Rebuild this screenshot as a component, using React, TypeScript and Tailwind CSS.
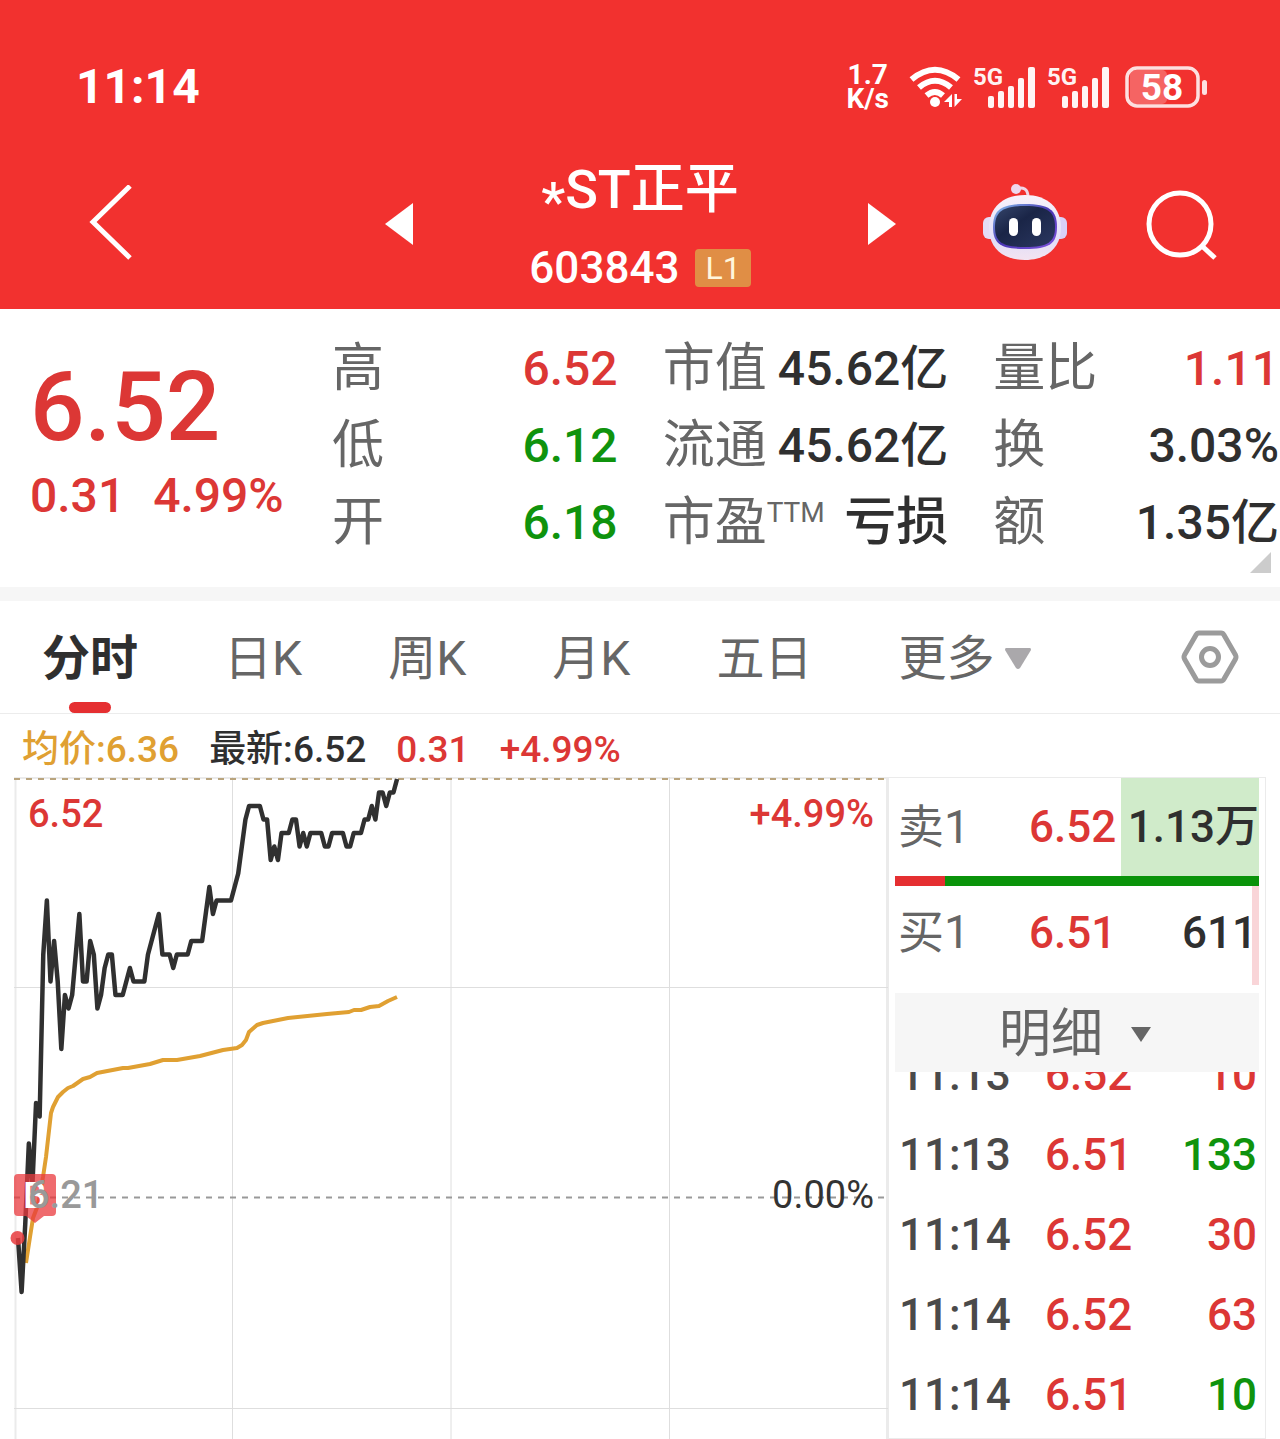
import clsx from 'clsx';

type Tone = 'up' | 'down' | 'dark';

const toneClass: Record<Tone, string> = {
  up: 'text-[#dc3735]',
  down: 'text-[#0f930d]',
  dark: 'text-[#2f2f2f]',
};

const stats: { label: string; sup?: string; value: string; tone: Tone }[] = [
  { label: '高', value: '6.52', tone: 'up' },
  { label: '市值', value: '45.62亿', tone: 'dark' },
  { label: '量比', value: '1.11', tone: 'up' },
  { label: '低', value: '6.12', tone: 'down' },
  { label: '流通', value: '45.62亿', tone: 'dark' },
  { label: '换', value: '3.03%', tone: 'dark' },
  { label: '开', value: '6.18', tone: 'down' },
  { label: '市盈', sup: 'TTM', value: '亏损', tone: 'dark' },
  { label: '额', value: '1.35亿', tone: 'dark' },
];

const tabs = ['分时', '日K', '周K', '月K', '五日'];

const trades: { time: string; price: string; volume: string; tone: Tone }[] = [
  { time: '11:13', price: '6.52', volume: '10', tone: 'up' },
  { time: '11:13', price: '6.51', volume: '133', tone: 'down' },
  { time: '11:14', price: '6.52', volume: '30', tone: 'up' },
  { time: '11:14', price: '6.52', volume: '63', tone: 'up' },
  { time: '11:14', price: '6.51', volume: '10', tone: 'down' },
];

// Minute prices, in cents above the previous close (6.21)
const minutes = [
  -3, -7, -2, 4, 1, 7, 6, 18, 22, 16, 19, 16, 11, 15, 14, 15, 18, 21, 16, 16, 19, 18, 14, 15, 17, 18, 18,
  15, 15, 15, 16, 17, 16, 16, 16, 16, 18, 19, 20, 21, 18, 18, 18, 17, 18, 18, 18, 18, 19, 19, 19, 19, 21,
  23, 21, 22, 22, 22, 22, 22, 23, 24, 26, 28, 29, 29, 29, 29, 28, 28, 25, 26, 25, 27, 27, 27, 28, 28, 26,
  27, 26, 27, 27, 27, 27, 26, 26, 27, 27, 27, 27, 26, 26, 27, 27, 27, 28, 28, 29, 28, 30, 30, 29, 30, 30,
  31,
];

const pricePoints = minutes.map((cents, i) => `${4 + i * 3.61},${2 + (31 - cents) * 13.5}`).join(' ');

const averagePoints =
  '12,486 16,460 19,441 24,428 29,400 32,380 37,336 39,330 44,320 49,315 54,311 59,309 69,302 76,300 83,296 109,291 114,291 136,287 149,283 163,283 186,279 209,273 223,271 228,268 232,263 235,255 243,248 249,246 274,241 313,237 335,235 340,233 347,233 356,230 365,229 374,224 383,220';

function Signal() {
  return (
    <svg className="overflow-visible" width="63" height="44" viewBox="0 0 63 44" fill="#fff" fillOpacity=".95">
      <text x="0" y="20" fontSize="24" fontWeight="700">5G</text>
      <rect x="15" y="31" width="6" height="12" rx="2" />
      <rect x="25" y="26" width="6" height="17" rx="2" />
      <rect x="35" y="21" width="6" height="22" rx="2" />
      <rect x="45" y="13" width="6" height="30" rx="2" />
      <rect x="55" y="2" width="7" height="41" rx="2" />
    </svg>
  );
}

function StatusBar() {
  return (
    <div className="flex h-[139px] items-center justify-between pt-[35px] pr-[72px] pl-[76px]">
      <span className="text-5xl leading-none font-bold">11:14</span>
      <div className="flex items-center gap-[11px]">
        <div className="mr-[9px] text-center text-[28px] leading-6 font-bold">
          1.7
          <br />
          K/s
        </div>
        <svg width="53" height="44" viewBox="0 0 53 44" fill="none" stroke="#fff" strokeWidth="6">
          <path d="M2.500 14.500Q26 -5 49.500 14.500" />
          <path d="M10 22.500Q26 9 42 22.500" />
          <path d="M17.500 30.500Q26 23.500 34 30.500" />
          <circle cx="26" cy="37" r="5" fill="#fff" stroke="none" />
          <path d="M43 29v13h-3v-5H35zM45.500 29h2.500v5H53L45.500 42z" fill="#fff" stroke="none" />
        </svg>
        <Signal />
        <Signal />
        <svg className="ml-1" width="83" height="44" viewBox="0 0 83 44">
          <rect x="5" y="5" width="37" height="34" rx="5" fill="#fff" fillOpacity=".25" />
          <rect x="2" y="3" width="71" height="38" rx="10" fill="none" stroke="#fff" strokeOpacity=".85" strokeWidth="3.500" />
          <rect x="77" y="15" width="5" height="15" rx="2.500" fill="#fff" fillOpacity=".85" />
          <text x="37" y="35" textAnchor="middle" fontSize="37" fontWeight="700" fill="#fff">58</text>
        </svg>
      </div>
    </div>
  );
}

function RobotIcon() {
  return (
    <svg width="86" height="80" viewBox="0 4 86 80">
      <defs>
        <linearGradient id="shell" x1="0" y1="0" x2="0" y2="1">
          <stop offset="0" stopColor="#f8f2fb" />
          <stop offset=".7" stopColor="#e2def8" />
          <stop offset="1" stopColor="#f3e4f1" />
        </linearGradient>
        <linearGradient id="rim" x1="0" y1="0" x2="1" y2="1">
          <stop offset="0" stopColor="#86c4ec" />
          <stop offset=".5" stopColor="#4a35b4" />
          <stop offset="1" stopColor="#8155df" />
        </linearGradient>
        <linearGradient id="visor" x1="0" y1="0" x2="1" y2="1">
          <stop offset="0" stopColor="#35456b" />
          <stop offset=".4" stopColor="#1a2547" />
          <stop offset="1" stopColor="#2b3861" />
        </linearGradient>
      </defs>
      <path d="M33 9Q46 5 46 17" fill="none" stroke="#f0d5e6" strokeWidth="3" />
      <circle cx="34" cy="9" r="5" fill="#eed8ed" />
      <rect x="1" y="37" width="14" height="22" rx="6" fill="#e4dcf7" />
      <rect x="71" y="37" width="14" height="22" rx="6" fill="#d9d0f8" />
      <path d="M43 15C66 15 79 28 79 48C79 69 63 80 43 80C22 80 7 69 7 48C7 28 20 15 43 15Z" fill="url(#shell)" />
      <path d="M43 24C67 24 75 30 75 47C75 64 67 69 43 69C19 69 11 64 11 47C11 30 19 24 43 24Z" fill="url(#rim)" />
      <path d="M43 26C66 26 73 32 73 47C73 62 66 67 43 67C20 67 13 62 13 47C13 32 20 26 43 26Z" fill="url(#visor)" />
      <rect x="27" y="38" width="9" height="18" rx="4.500" fill="#fff" />
      <rect x="50" y="38" width="9" height="18" rx="4.500" fill="#fff" />
    </svg>
  );
}

function NavBar() {
  return (
    <nav className="grid h-[170px] grid-cols-[1fr_455px_1fr] items-center">
      <div className="flex items-center justify-between pl-[88px]">
        <button type="button" aria-label="返回">
          <svg width="44" height="78" viewBox="0 0 44 78" fill="none" stroke="#fff" strokeWidth="5">
            <path d="M42 1L5 37L42 73" />
          </svg>
        </button>
        <button type="button" aria-label="上一只">
          <svg width="28" height="42" viewBox="0 0 28 42" fill="#fff">
            <path d="M28 0V42L0 21Z" />
          </svg>
        </button>
      </div>
      <div className="flex flex-col items-center gap-[18px]">
        <h1 className="text-[54px] leading-[64px] font-medium">
          <span className="align-sub leading-none">*</span>ST正平
        </h1>
        <div className="flex items-center gap-4">
          <span className="text-[44px] leading-[44px] font-medium">603843</span>
          <span className="rounded bg-[#e08e45] px-2.5 text-[32px] leading-[38px] text-[#fff6dc]">L1</span>
        </div>
      </div>
      <div className="flex items-center justify-between pr-[62px]">
        <button type="button" aria-label="下一只">
          <svg width="28" height="42" viewBox="0 0 28 42" fill="#fff">
            <path d="M0 0V42L28 21Z" />
          </svg>
        </button>
        <div className="flex items-center gap-[78px]">
          <button type="button" aria-label="智能助手">
            <RobotIcon />
          </button>
          <button type="button" aria-label="搜索">
            <svg width="72" height="72" viewBox="0 0 72 72" fill="none" stroke="#fff" strokeWidth="5">
              <circle cx="34" cy="36" r="31" />
              <path d="M56 58L69 70" />
            </svg>
          </button>
        </div>
      </div>
    </nav>
  );
}

function Quote() {
  return (
    <section className="flex h-[292px] border-b-[14px] border-[#f6f6f6] pt-[21px] pr-px pl-[30px]">
      <div className="w-[302px] shrink-0 pt-8 font-medium text-[#dc3735]">
        <div className="text-8xl leading-[90px]">6.52</div>
        <div className="flex gap-7 pt-2 text-5xl leading-[72px]">
          <span>0.31</span>
          <span>4.99%</span>
        </div>
      </div>
      <div className="relative flex-1">
        <dl className="grid grid-cols-3 gap-x-[45px] text-5xl leading-[77px]">
          {stats.map(({ label, sup, value, tone }) => (
            <div key={label} className="flex justify-between whitespace-nowrap">
              <dt className="flex text-[52px] text-[#666]">
                {label}
                {sup && <span className="text-[28px] leading-[58px]">{sup}</span>}
              </dt>
              <dd className={clsx('font-medium', toneClass[tone], sup && 'text-[52px]')}>{value}</dd>
            </div>
          ))}
        </dl>
        <svg className="absolute right-2 bottom-[14px]" width="21" height="21" viewBox="0 0 21 21">
          <path d="M21 0V21H0Z" fill="#ccc" />
        </svg>
      </div>
    </section>
  );
}

function Tabs() {
  return (
    <div className="flex h-[113px] items-center justify-between border-b border-[#ececec] pr-[41px] pl-[42px]">
      <div className="flex h-full gap-[86px] text-5xl whitespace-nowrap text-[#666]">
        {tabs.map((tab, i) => (
          <button
            key={tab}
            type="button"
            className={clsx('relative pt-1', i === 0 && 'font-bold text-[#2f2f2f]')}
          >
            {tab}
            {i === 0 && (
              <span className="absolute bottom-0 left-1/2 h-[11px] w-[42px] -translate-x-1/2 rounded-full bg-[#e52f31]" />
            )}
          </button>
        ))}
        <button type="button" className="flex items-center gap-[11px] pt-1">
          更多
          <svg width="26" height="22" viewBox="0 0 26 22" fill="#aaa8ab">
            <path d="M1 0H25Q26 0 26 2L15 20Q13 22 11 20L0 2Q0 0 1 0Z" />
          </svg>
        </button>
      </div>
      <button type="button" aria-label="设置">
        <svg width="58" height="54" viewBox="0 0 58 54" fill="none" stroke="#9b9b9b" strokeWidth="5">
          <path d="M18 3H40Q42 3 43 5L54.500 25Q55.500 27 54.500 29L43 49Q42 51 40 51H18Q16 51 15 49L3.500 29Q2.500 27 3.500 25L15 5Q16 3 18 3Z" />
          <circle cx="29" cy="27" r="8.500" />
        </svg>
      </button>
    </div>
  );
}

function Chart() {
  return (
    <div className="relative min-w-0 flex-1 text-[38px] leading-none">
      <svg className="block w-full overflow-visible" viewBox="0 0 874 662" fill="none">
        <g stroke="#dedede">
          <path d="M1.500 0V662M873 0V662M0 1H874" stroke="#ebebeb" strokeWidth="2" />
          <path d="M218.500 0V662M437 0V662M655.500 0V662M0 210.500H874M0 631.500H874" />
        </g>
        <path d="M0 2H874" stroke="#b9a47d" strokeWidth="2" strokeDasharray="6 6" />
        <path d="M0 420.500H874" stroke="#999" strokeWidth="2" strokeDasharray="6 6" />
        <polyline points={averagePoints} stroke="#e0a032" strokeWidth="4" strokeLinejoin="round" />
        <polyline points={pricePoints} stroke="#303030" strokeWidth="4.500" strokeLinejoin="round" />
        <circle cx="3.500" cy="461" r="7" fill="#e83b3d" fillOpacity=".85" />
        <path
          d="M4 397H38Q42 397 42 401V435Q42 439 38 439H30L21 446L12 439H4Q0 439 0 435V401Q0 397 4 397Z"
          fill="#ea3a3d"
          fillOpacity=".75"
        />
        <text x="9" y="431" fontSize="37" fontWeight="500" fill="#fff">B</text>
      </svg>
      <span className="absolute top-[18px] left-[14px] font-medium text-[#dc3735]">6.52</span>
      <span className="absolute top-[18px] right-[14px] font-medium text-[#dc3735]">+4.99%</span>
      <span className="absolute top-[399px] left-[14px] font-medium text-[#999]">6.21</span>
      <span className="absolute top-[399px] right-[14px] text-[#333]">0.00%</span>
    </div>
  );
}

function OrderBook() {
  return (
    <aside className="flex w-[378px] shrink-0 flex-col border border-[#ebebeb] px-1.5 text-[44px] font-medium">
      <div className="flex h-[98px] items-center">
        <span className="w-[134px] pl-[3px] text-[46px] font-normal text-[#666]">卖1</span>
        <span className="text-[#dc3735]">6.52</span>
        <span className="ml-auto flex h-full w-[138px] items-center justify-end bg-[#d0ebca] text-[#2f2f2f]">
          1.13万
        </span>
      </div>
      <div className="flex h-2.5 shrink-0 bg-[#0a930a]">
        <div className="w-[50px] bg-[#e52f31]" />
      </div>
      <div className="relative mb-2 flex h-[99px] items-center pb-1.5">
        <span className="w-[134px] pl-[3px] text-[46px] font-normal text-[#666]">买1</span>
        <span className="text-[#dc3735]">6.51</span>
        <span className="ml-auto pr-0.5 text-[#2f2f2f]">611</span>
        <span className="absolute top-0 right-0 h-full w-[7px] bg-[#f9d5d8]" />
      </div>
      <button
        type="button"
        className="flex h-[79px] shrink-0 items-center justify-center gap-7 bg-[#f6f6f6] pt-1 pr-1 text-[52px] leading-none font-normal text-[#666]"
      >
        明细
        <svg width="20" height="15" viewBox="0 0 20 15" fill="#666">
          <path d="M0 0H20L10 15Z" />
        </svg>
      </button>
      <div className="min-h-0 flex-1 overflow-hidden">
        <table className="-mt-[37px] w-full leading-[80px]">
          <tbody>
            {trades.map(({ time, price, volume, tone }, i) => (
              <tr key={i} className="h-20">
                <td className="w-[150px] p-0 pl-1 text-[#4a4a4a]">{time}</td>
                <td className="p-0 text-[#dc3735]">{price}</td>
                <td className={clsx('p-0 pr-0.5 text-right', toneClass[tone])}>{volume}</td>
              </tr>
            ))}
          </tbody>
        </table>
      </div>
    </aside>
  );
}

export default function App() {
  return (
    <main className="overflow-hidden bg-white font-[Roboto,'Noto_Sans_CJK_SC',sans-serif]">
      <header className="bg-[#f2312f] text-white">
        <StatusBar />
        <NavBar />
      </header>
      <Quote />
      <Tabs />
      <div className="flex h-[63px] items-center gap-[30px] pt-2 pl-[22px] text-[37px] leading-none font-medium whitespace-nowrap">
        <span className="text-[#e0a032]">均价:6.36</span>
        <span className="text-[#2f2f2f]">最新:6.52</span>
        <span className="text-[#dc3735]">0.31</span>
        <span className="text-[#dc3735]">+4.99%</span>
      </div>
      <div className="flex px-[14px]">
        <Chart />
        <OrderBook />
      </div>
    </main>
  );
}
